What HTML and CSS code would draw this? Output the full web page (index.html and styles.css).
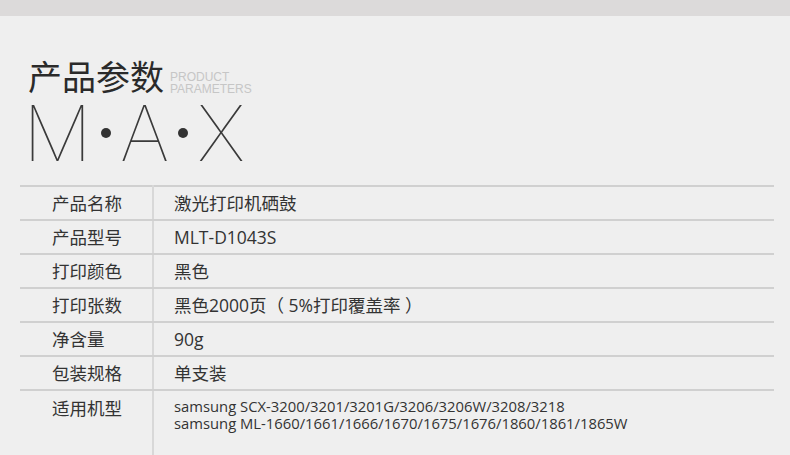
FILE: index.html
```html
<!DOCTYPE html>
<html lang="zh-CN">
<head>
    <meta charset="UTF-8">
    <title>产品参数</title>
    <link rel="stylesheet" href="styles.css">
</head>
<body>
    <div class="top-band"></div>

    <div class="page">
        <div class="heading">
            <h1>产品参数</h1>
            <div class="heading-en">PRODUCT<br>PARAMETERS</div>
        </div>
        <div class="brand">M<span class="dot"></span>A<span class="dot"></span>X</div>

        <table class="params">
            <tr>
                <td class="name">产品名称</td>
                <td>激光打印机硒鼓</td>
            </tr>
            <tr>
                <td class="name">产品型号</td>
                <td>MLT-D1043S</td>
            </tr>
            <tr>
                <td class="name">打印颜色</td>
                <td>黑色</td>
            </tr>
            <tr>
                <td class="name">打印张数</td>
                <td>黑色2000页（ 5%打印覆盖率 ）</td>
            </tr>
            <tr>
                <td class="name">净含量</td>
                <td>90g</td>
            </tr>
            <tr>
                <td class="name">包装规格</td>
                <td>单支装</td>
            </tr>
            <tr class="tall">
                <td class="name">适用机型</td>
                <td class="models">
                    samsung SCX-3200/3201/3201G/3206/3206W/3208/3218<br>
                    samsung ML-1660/1661/1666/1670/1675/1676/1860/1861/1865W
                </td>
            </tr>
        </table>
    </div>
</body>
</html>
```

FILE: styles.css
```css
body {
    margin: 0;
    background-color: #efefef;
    font-family: "Open Sans", "Noto Sans CJK SC", sans-serif;
    color: #333333;
}

.top-band {
    height: 16px;
    background-color: #dcdada;
}

.page {
    padding: 40px 16px 0 20px;
}

.heading {
    display: flex;
    align-items: flex-end;
    gap: 6px;
    padding-left: 8px;
    height: 40px;
}

h1 {
    margin: 0;
    font-family: "Noto Sans CJK SC", sans-serif;
    font-size: 34px;
    font-weight: 400;
    line-height: 40px;
    color: #2a2a2a;
}

.heading-en {
    font-family: "Liberation Sans", Arial, sans-serif;
    font-size: 12px;
    line-height: 12px;
    color: #c6c6c6;
    padding-bottom: 1px;
}

.brand {
    display: flex;
    align-items: center;
    gap: 9px;
    padding: 6px 0 0 3px;
    height: 62px;
    font-family: Inter, sans-serif;
    font-weight: 100;
    font-size: 77px;
    line-height: 62px;
    color: #3a3a3a;
}

.dot {
    width: 10px;
    height: 10px;
    border-radius: 50%;
    background-color: #333333;
}

.params {
    width: 754px;
    margin-top: 21px;
    border-collapse: collapse;
}

.params td {
    height: 32px;
    padding: 0 0 0 20px;
    border-top: 2px solid #d0d0d0;
    border-bottom: 2px solid #d0d0d0;
    font-size: 17.5px;
    line-height: 24px;
    vertical-align: middle;
}

.params td.name {
    width: 100px;
    padding-left: 32px;
    border-right: 2px solid #d8d8d8;
}

.params .tall td {
    height: 65px;
    vertical-align: top;
    padding-top: 5px;
}

.params td.models {
    font-size: 14.8px;
    line-height: 17px;
    padding-top: 7px;
}
```
